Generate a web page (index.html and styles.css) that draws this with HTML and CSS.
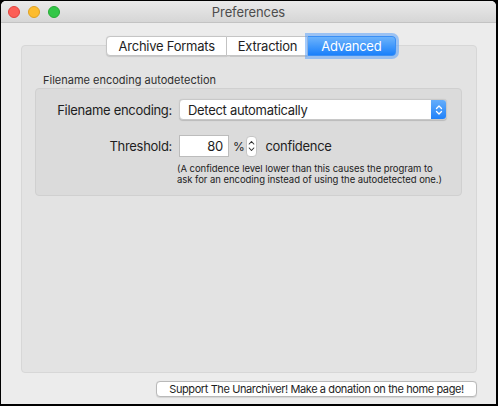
FILE: index.html
```html
<!DOCTYPE html>
<html>
<head>
<meta charset="utf-8">
<link rel="stylesheet" href="styles.css">
</head>
<body>
<div class="window">
  <div class="titlebar">
    <div class="lights">
      <span class="light red"></span>
      <span class="light yellow"></span>
      <span class="light green"></span>
    </div>
    <div class="title">Preferences</div>
    <div></div>
  </div>
  <div class="content">
    <div class="tabs">
      <div class="tab first">Archive Formats</div>
      <div class="tab">Extraction</div>
      <div class="tab active">Advanced</div>
    </div>
    <div class="panel">
      <div class="group-label">Filename encoding autodetection</div>
      <div class="group">
        <div class="row">
          <div class="label">Filename encoding:</div>
          <div class="popup">
            <span class="popup-text">Detect automatically</span>
            <span class="popup-arrows">
              <svg width="8" height="12" viewBox="0 0 8 12"><path d="M1.5 4.5 L4 2 L6.5 4.5 M1.5 7.5 L4 10 L6.5 7.5" fill="none" stroke="#fff" stroke-width="1.3" stroke-linecap="round" stroke-linejoin="round"/></svg>
            </span>
          </div>
        </div>
        <div class="row row-threshold">
          <div class="label">Threshold:</div>
          <div class="threshold">
            <div class="field">80</div>
            <span class="pct">%</span>
            <span class="stepper">
              <svg width="7" height="14" viewBox="0 0 7 14"><path d="M1.2 5 L3.5 2.5 L5.8 5 M1.2 9 L3.5 11.5 L5.8 9" fill="none" stroke="#333" stroke-width="1.1" stroke-linecap="round" stroke-linejoin="round"/></svg>
            </span>
            <span class="conf">confidence</span>
          </div>
        </div>
        <div class="note">(A confidence level lower than this causes the program to<br>ask for an encoding instead of using the autodetected one.)</div>
      </div>
    </div>
    <div class="footer">
      <button class="donate">Support The Unarchiver! Make a donation on the home page!</button>
    </div>
  </div>
</div>
</body>
</html>
```
FILE: styles.css
```css
html, body {
  margin: 0;
  padding: 0;
  background: #000;
  width: 498px;
  height: 406px;
  overflow: hidden;
}
body {
  font-family: "Inter", "Roboto", "Liberation Sans", sans-serif;
  color: #1e1e1e;
}
.window {
  margin: 1px 2px 2px 1px;
  width: 495px;
  height: 403px;
  background: #ececec;
  border-radius: 5px 5px 0 0;
  overflow: hidden;
  display: flex;
  flex-direction: column;
}
.titlebar {
  height: 21px;
  flex: none;
  border-bottom: 1px solid #c3c3c3;
  background: linear-gradient(#eaeaea, #d6d6d6);
  display: grid;
  grid-template-columns: 1fr auto 1fr;
  align-items: center;
}
.lights {
  display: flex;
  gap: 8px;
  padding-left: 7px;
}
.light {
  width: 12px;
  height: 12px;
  border-radius: 50%;
  box-sizing: border-box;
}
.red { background: #fc5f57; border: 0.5px solid #e0443e; }
.yellow { background: #fdbc2e; border: 0.5px solid #dea123; }
.green { background: #33c748; border: 0.5px solid #27aa35; }
.title {
  font-size: 13px;
  color: #4d4d4d;
  padding-top: 1px;
  letter-spacing: -0.1px;
}
.content {
  flex: 1;
  display: flex;
  flex-direction: column;
  padding: 13px 19px 7px 20px;
}
.tabs {
  display: flex;
  align-self: center;
  margin-left: 4px;
  height: 20px;
  margin-bottom: -11px;
  position: relative;
  z-index: 1;
  font-size: 13px;
  letter-spacing: -0.25px;
}
.tab {
  background: #fff;
  border: 1px solid #c5c5c5;
  border-left: none;
  padding: 0 10px 0 11px;
  display: flex;
  align-items: center;
  box-shadow: 0 0.5px 1px rgba(0,0,0,0.12);
}
.tab.first {
  border-left: 1px solid #c5c5c5;
  border-radius: 4px 0 0 4px;
  padding: 0 11px 0 12px;
}
.tab.active {
  background: linear-gradient(#6db3fb, #1a80fb);
  border-color: #3a8ff5;
  color: #fff;
  border-radius: 0 4px 4px 0;
  padding: 0 14px 0 13px;
  box-shadow: 0 0 0 3px rgba(90,160,250,0.55);
}
.panel {
  flex: 1;
  background: #e3e3e3;
  border: 1px solid #d7d7d7;
  border-radius: 4px;
  padding: 27px 14px 0 13px;
}
.group-label {
  font-size: 11px;
  color: #2f2f2f;
  padding-left: 8px;
  height: 14px;
  margin-bottom: 1px;
}
.group {
  background: #dbdbdb;
  border: 1px solid #d0d0d0;
  border-radius: 4px;
  height: 96px;
  padding-top: 10px;
  box-sizing: content-box;
}
.row {
  display: grid;
  grid-template-columns: 136px auto;
  column-gap: 7px;
  align-items: center;
  letter-spacing: -0.3px;
}
.row-threshold {
  margin-top: 15px;
}
.label {
  text-align: right;
  font-size: 13px;
}
.popup {
  width: 268px;
  height: 21px;
  box-sizing: border-box;
  background: #fff;
  border: 1px solid #c8c8c8;
  border-radius: 4px;
  box-shadow: 0 0.5px 1px rgba(0,0,0,0.15);
  display: flex;
  align-items: center;
  justify-content: space-between;
  overflow: hidden;
  font-size: 13px;
}
.popup-text {
  padding-left: 8px;
}
.popup-arrows {
  width: 16px;
  height: 21px;
  margin-right: -1px;
  background: linear-gradient(#69b0fb, #1c7ffa);
  border-radius: 0 4px 4px 0;
  display: flex;
  align-items: center;
  justify-content: center;
}
.threshold {
  display: flex;
  align-items: center;
  font-size: 13px;
}
.field {
  width: 50px;
  height: 22px;
  box-sizing: border-box;
  background: #fff;
  border: 1px solid #bcbcbc;
  text-align: right;
  padding-right: 5px;
  line-height: 20px;
}
.pct {
  margin-left: 4px;
  font-size: 12px;
}
.stepper {
  margin-left: 2px;
  width: 11px;
  height: 21px;
  box-sizing: border-box;
  background: #fff;
  border: 1px solid #c5c5c5;
  border-radius: 4px;
  display: flex;
  align-items: center;
  justify-content: center;
}
.conf {
  margin-left: 8px;
}
.note {
  font-size: 9.5px;
  line-height: 11px;
  margin-top: 6px;
  margin-left: 141px;
  color: #222;
  letter-spacing: -0.05px;
}
.footer {
  display: flex;
  justify-content: flex-end;
  padding-top: 8px;
}
.donate {
  font-family: inherit;
  font-size: 11px;
  letter-spacing: -0.4px;
  color: #1e1e1e;
  height: 16px;
  width: 321px;
  padding: 0;
  background: #fff;
  border: 1px solid #b9b9b9;
  border-radius: 4px;
  box-shadow: 0 0.5px 1px rgba(0,0,0,0.1);
  display: flex;
  align-items: center;
  justify-content: center;
}
```
